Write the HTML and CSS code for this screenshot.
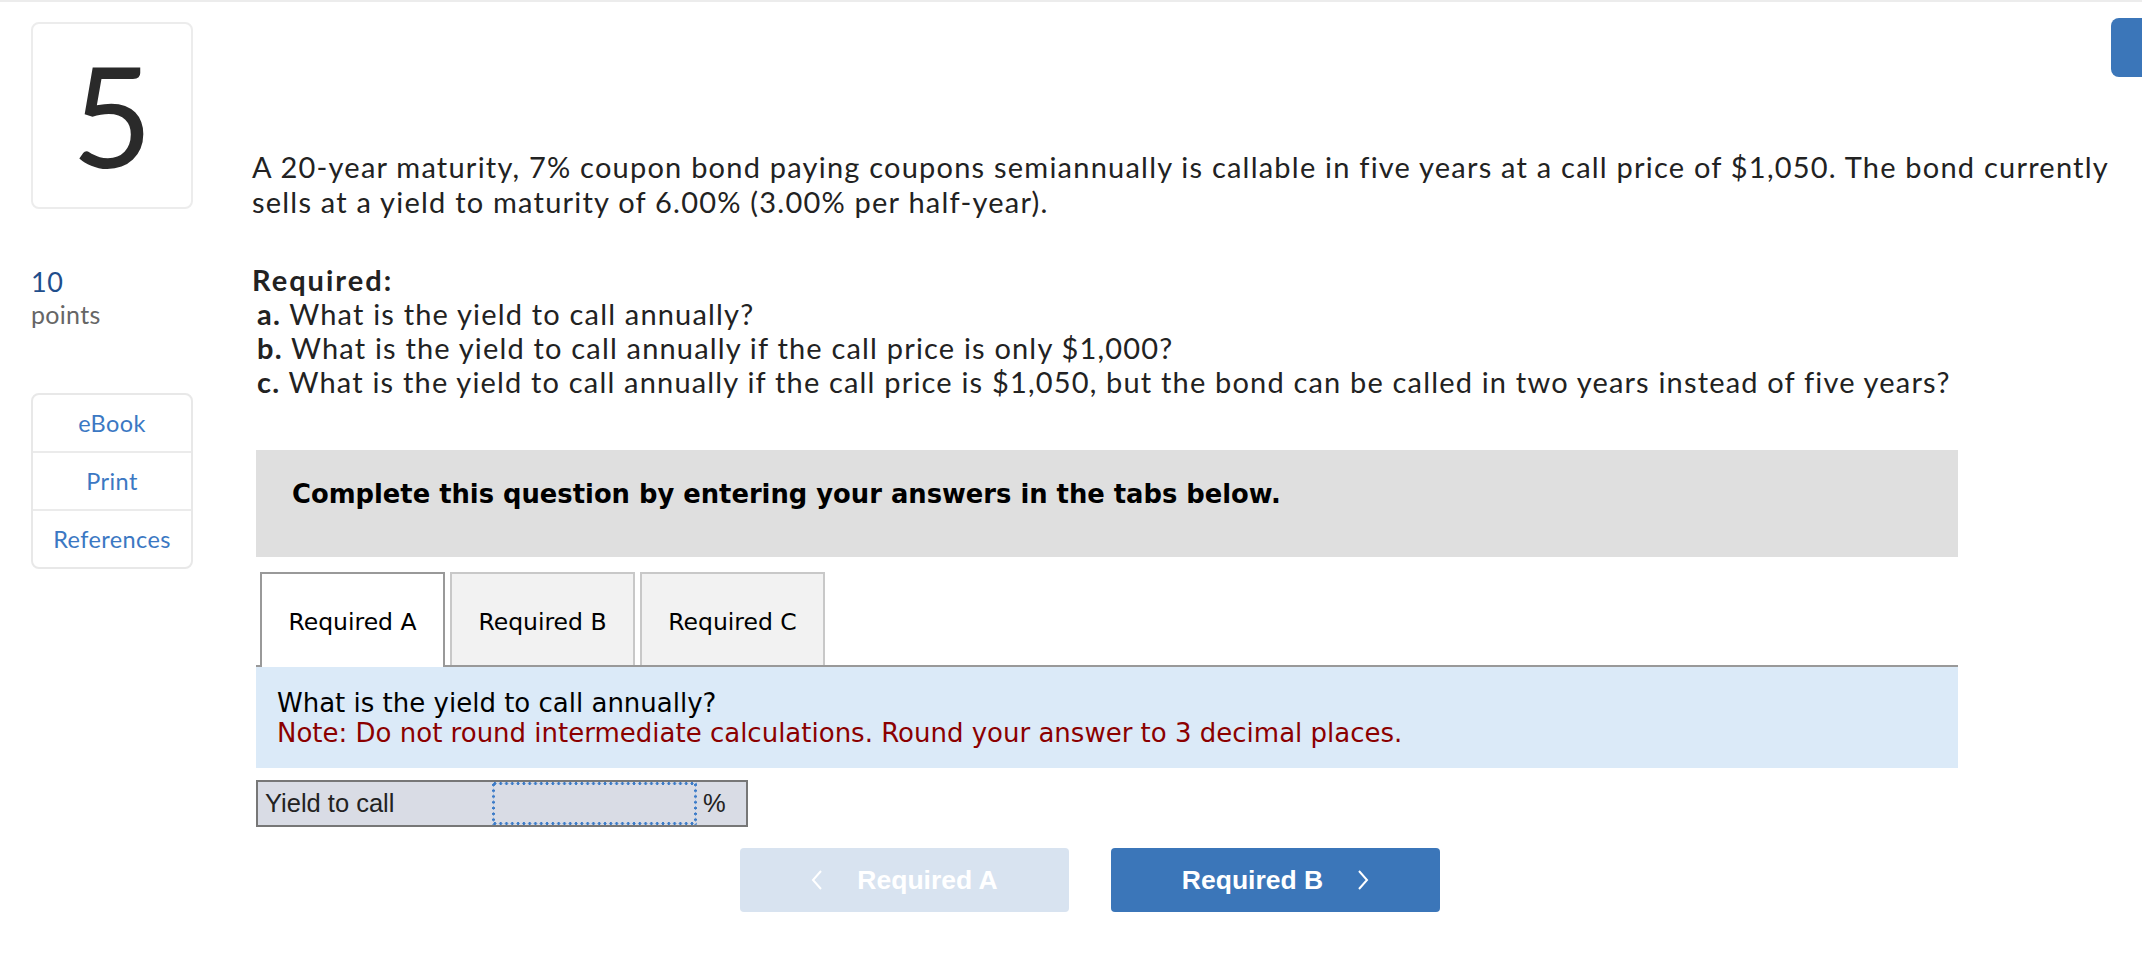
FILE: index.html
```html
<!DOCTYPE html>
<html lang="en">
<head>
<meta charset="utf-8">
<title>Question 5</title>
<link rel="stylesheet" href="styles.css">
</head>
<body>
<div class="topbar"></div>
<div class="page">
  <aside class="sidebar">
    <div class="qnum">5</div>
    <div class="points">
      <div class="points-value">10</div>
      <div class="points-label">points</div>
    </div>
    <nav class="menu">
      <a class="menu-item">eBook</a>
      <a class="menu-item">Print</a>
      <a class="menu-item">References</a>
    </nav>
  </aside>
  <main class="main">
    <p class="stem">A 20-year maturity, 7% coupon bond paying coupons semiannually is callable in five years at a call price of $1,050. The bond currently sells at a yield to maturity of 6.00% (3.00% per half-year).</p>
    <div class="required-title">Required:</div>
    <ul class="required-list">
      <li><b>a.</b> What is the yield to call annually?</li>
      <li><b>b.</b> What is the yield to call annually if the call price is only $1,000?</li>
      <li><b>c.</b> What is the yield to call annually if the call price is $1,050, but the bond can be called in two years instead of five years?</li>
    </ul>
    <div class="work">
      <div class="instruction">Complete this question by entering your answers in the tabs below.</div>
      <div class="tabs">
        <div class="tab active">Required A</div>
        <div class="tab">Required B</div>
        <div class="tab">Required C</div>
      </div>
      <div class="prompt">
        <div class="prompt-q">What is the yield to call annually?</div>
        <div class="prompt-note">Note: Do not round intermediate calculations. Round your answer to 3 decimal places.</div>
      </div>
      <div class="answer-row">
        <div class="answer-label">Yield to call</div>
        <div class="answer-input"></div>
        <div class="answer-unit">%</div>
      </div>
      <div class="nav-buttons">
        <div class="nav-btn prev">
          <svg class="chev" width="12" height="20" viewBox="0 0 12 20"><polyline points="10,1 2,10 10,19" fill="none" stroke="#fff" stroke-width="2"/></svg>
          <span>Required A</span>
        </div>
        <div class="nav-btn next">
          <span>Required B</span>
          <svg class="chev" width="12" height="20" viewBox="0 0 12 20"><polyline points="2,1 10,10 2,19" fill="none" stroke="#fff" stroke-width="2"/></svg>
        </div>
      </div>
    </div>
  </main>
</div>
<div class="corner-btn"></div>
</body>
</html>
```

FILE: styles.css
```css
* { box-sizing: border-box; }
html, body { margin: 0; padding: 0; background: #fff; }
body {
  font-family: Lato, "Open Sans", sans-serif;
  color: #222;
  width: 2142px;
  height: 972px;
  overflow: hidden;
  position: relative;
}
.topbar { height: 2px; background: #ececec; }
.page {
  display: flex;
  padding: 20px 0 0 31px;
}
.sidebar {
  width: 162px;
  flex: 0 0 162px;
  display: flex;
  flex-direction: column;
}
.qnum {
  height: 187px;
  border: 2px solid #ececec;
  border-radius: 8px;
  display: flex;
  align-items: center;
  justify-content: center;
  font-size: 140px;
  line-height: 1;
  color: #2a2a2a;
  padding-bottom: 4px;
}
.points { margin-top: 56px; line-height: 33px; }
.points-value { color: #1f4e8c; font-size: 27px; letter-spacing: 0.5px; }
.points-label { color: #666; font-size: 25px; letter-spacing: 0.3px; }
.menu {
  margin-top: 62px;
  border: 2px solid #e8e8e8;
  border-radius: 8px;
  display: flex;
  flex-direction: column;
}
.menu-item {
  height: 58px;
  display: flex;
  align-items: center;
  justify-content: center;
  font-size: 23.5px;
  letter-spacing: 0.4px;
  color: #3b78c3;
  border-bottom: 2px solid #ebebeb;
}
.menu-item:first-child { height: 58px; }
.menu-item:last-child { border-bottom: none; height: 56px; }
.main {
  margin-left: 59px;
  width: 1875px;
}
.stem {
  margin: 127px 0 0 0;
  font-size: 29px;
  line-height: 35px;
  letter-spacing: 1.22px;
}
.required-title {
  margin-top: 44px;
  font-size: 29px;
  line-height: 34px;
  font-weight: 700;
  letter-spacing: 2px;
}
.required-list {
  list-style: none;
  margin: 0;
  padding: 0 0 0 5px;
  font-size: 29px;
  line-height: 34px;
  letter-spacing: 1.18px;
}
.work {
  margin: 51px 0 0 4px;
  width: 1702px;
}
.instruction {
  height: 107px;
  background: #dfdfdf;
  padding: 29px 0 0 36px;
  font-family: "DejaVu Sans", Verdana, sans-serif;
  font-weight: 700;
  font-size: 25.8px;
  line-height: 30px;
  color: #000;
}
.tabs {
  margin-top: 15px;
  display: flex;
  gap: 5px;
  padding-left: 4px;
  border-bottom: 2px solid #999;
  height: 95px;
}
.tab {
  width: 185px;
  height: 93px;
  border: 2px solid #c8c8c8;
  border-bottom: none;
  background: #f2f2f2;
  font-family: "DejaVu Sans", Verdana, sans-serif;
  font-size: 23.5px;
  line-height: 28px;
  padding-top: 34px;
  text-align: center;
  color: #000;
}
.tab.active {
  background: #fff;
  border-color: #999;
  height: 95px;
}
.prompt {
  background: #dbeaf8;
  padding: 21px 21px 20px 21px;
  font-family: "DejaVu Sans", Verdana, sans-serif;
  font-size: 26px;
  line-height: 30px;
}
.prompt-q { color: #000; }
.prompt-note { color: #8b0000; }
.answer-row {
  margin-top: 12px;
  width: 492px;
  height: 47px;
  border: 2px solid #777;
  background: #d9dce5;
  display: flex;
  align-items: stretch;
  font-family: "Liberation Sans", Arial, sans-serif;
  font-size: 25.5px;
  color: #222;
}
.answer-label {
  width: 234px;
  padding-left: 7px;
  display: flex;
  align-items: center;
}
.answer-input {
  width: 205px;
  background:
    radial-gradient(circle, #3b7bc8 1.3px, transparent 1.7px) left top / 5.8px 3px repeat-x,
    radial-gradient(circle, #3b7bc8 1.3px, transparent 1.7px) left bottom / 5.8px 3px repeat-x,
    radial-gradient(circle, #3b7bc8 1.3px, transparent 1.7px) left top / 3px 5.8px repeat-y,
    radial-gradient(circle, #3b7bc8 1.3px, transparent 1.7px) right top / 3px 5.8px repeat-y;
}
.answer-unit {
  padding-left: 6px;
  display: flex;
  align-items: center;
}
.nav-buttons {
  margin: 21px 0 0 484px;
  display: flex;
  gap: 42px;
}
.nav-btn {
  width: 329px;
  height: 64px;
  border-radius: 4px;
  display: flex;
  align-items: center;
  justify-content: center;
  gap: 34px;
  font-family: "Liberation Sans", Arial, sans-serif;
  font-weight: 700;
  font-size: 26.5px;
  color: #fff;
}
.nav-btn.prev { background: #d8e3f0; }
.nav-btn.next { background: #3b76b9; }
.chev { display: block; }
.corner-btn {
  position: absolute;
  top: 18px;
  left: 2111px;
  width: 60px;
  height: 59px;
  border-radius: 8px;
  background: #3b76b9;
}
```
